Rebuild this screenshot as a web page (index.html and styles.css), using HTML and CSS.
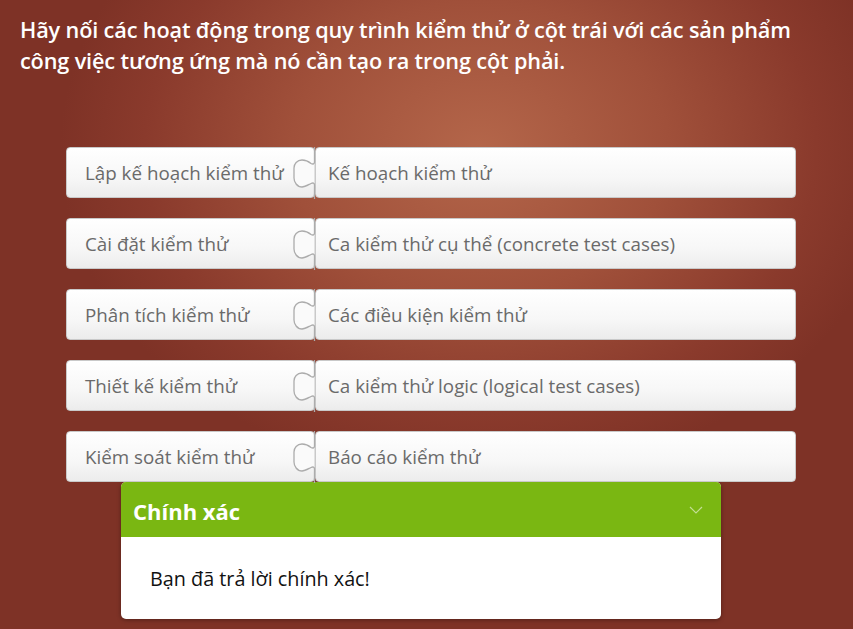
FILE: index.html
```html
<!DOCTYPE html>
<html lang="vi">
<head>
<meta charset="utf-8">
<link rel="stylesheet" href="styles.css">
</head>
<body>
<div class="slide">
  <p class="question">Hãy nối các hoạt động trong quy trình kiểm thử ở cột trái với các sản phẩm công việc tương ứng mà nó cần tạo ra trong cột phải.</p>
  <div class="pairs">
    <div class="pair">
      <div class="item left">Lập kế hoạch kiểm thử</div>
      <div class="item right">Kế hoạch kiểm thử</div>
      <svg class="joint" viewBox="0 0 26 52" width="26" height="52"><path d="M23.5 0 V15 C23.5 17 22 17.5 20 16.5 C17 14 14 13 11 13 C6 13 3 17 3 21 V31 C3 35 6 40 11 40 C14 40 17 38 20 36.5 C22 35.5 23.5 36 23.5 38 V52" fill="#fafafa" stroke="#acacac" stroke-width="1.3"/></svg>
    </div>
    <div class="pair">
      <div class="item left">Cài đặt kiểm thử</div>
      <div class="item right">Ca kiểm thử cụ thể (concrete test cases)</div>
      <svg class="joint" viewBox="0 0 26 52" width="26" height="52"><path d="M23.5 0 V15 C23.5 17 22 17.5 20 16.5 C17 14 14 13 11 13 C6 13 3 17 3 21 V31 C3 35 6 40 11 40 C14 40 17 38 20 36.5 C22 35.5 23.5 36 23.5 38 V52" fill="#fafafa" stroke="#acacac" stroke-width="1.3"/></svg>
    </div>
    <div class="pair">
      <div class="item left">Phân tích kiểm thử</div>
      <div class="item right">Các điều kiện kiểm thử</div>
      <svg class="joint" viewBox="0 0 26 52" width="26" height="52"><path d="M23.5 0 V15 C23.5 17 22 17.5 20 16.5 C17 14 14 13 11 13 C6 13 3 17 3 21 V31 C3 35 6 40 11 40 C14 40 17 38 20 36.5 C22 35.5 23.5 36 23.5 38 V52" fill="#fafafa" stroke="#acacac" stroke-width="1.3"/></svg>
    </div>
    <div class="pair">
      <div class="item left">Thiết kế kiểm thử</div>
      <div class="item right">Ca kiểm thử logic (logical test cases)</div>
      <svg class="joint" viewBox="0 0 26 52" width="26" height="52"><path d="M23.5 0 V15 C23.5 17 22 17.5 20 16.5 C17 14 14 13 11 13 C6 13 3 17 3 21 V31 C3 35 6 40 11 40 C14 40 17 38 20 36.5 C22 35.5 23.5 36 23.5 38 V52" fill="#fafafa" stroke="#acacac" stroke-width="1.3"/></svg>
    </div>
    <div class="pair">
      <div class="item left">Kiểm soát kiểm thử</div>
      <div class="item right">Báo cáo kiểm thử</div>
      <svg class="joint" viewBox="0 0 26 52" width="26" height="52"><path d="M23.5 0 V15 C23.5 17 22 17.5 20 16.5 C17 14 14 13 11 13 C6 13 3 17 3 21 V31 C3 35 6 40 11 40 C14 40 17 38 20 36.5 C22 35.5 23.5 36 23.5 38 V52" fill="#fafafa" stroke="#acacac" stroke-width="1.3"/></svg>
    </div>
  </div>
  <div class="feedback">
    <div class="fb-head">
      <span class="fb-title">Chính xác</span>
      <svg class="chev" width="14" height="8" viewBox="0 0 14 8"><path d="M1 1 L7 7 L13 1" fill="none" stroke="rgba(255,255,255,0.55)" stroke-width="1.2"/></svg>
    </div>
    <div class="fb-body">Bạn đã trả lời chính xác!</div>
  </div>
</div>
</body>
</html>
```

FILE: styles.css
```css
html, body {
  margin: 0;
  padding: 0;
}
body {
  width: 853px;
  height: 629px;
  overflow: hidden;
  font-family: "Open Sans", "Noto Sans", sans-serif;
}
.slide {
  width: 853px;
  height: 629px;
  background: radial-gradient(ellipse 420px 330px at 480px 150px, #b4664a 0%, #a0503a 45%, #8a3a2c 80%, #7e3226 100%);
  background-color: #7e3226;
  display: flex;
  flex-direction: column;
}
.question {
  margin: 0;
  padding: 14px 50px 0 20px;
  color: #ffffff;
  font-size: 21.7px;
  font-weight: 600;
  line-height: 31px;
  letter-spacing: -0.15px;
}
.pairs {
  margin: 71px 0 0 66px;
  width: 730px;
  display: flex;
  flex-direction: column;
  gap: 20px;
}
.pair {
  position: relative;
  display: flex;
  height: 51px;
}
.item {
  box-sizing: border-box;
  height: 51px;
  display: flex;
  align-items: center;
  background: linear-gradient(#ffffff, #f7f7f7 60%, #ececec);
  border: 1px solid #c9c9c9;
  border-radius: 4px;
  color: #6a6a6a;
  font-size: 18.8px;
}
.left {
  width: 249px;
  padding-left: 18px;
}
.right {
  flex: 1;
  padding-left: 12px;
}
.joint {
  position: absolute;
  left: 225px;
  top: 0;
}
.feedback {
  margin-left: 121px;
  width: 600px;
  border-radius: 5px;
  overflow: hidden;
  background: #ffffff;
  box-shadow: 0 1px 4px rgba(0, 0, 0, 0.35);
}
.fb-head {
  height: 55px;
  background: #7ab712;
  display: flex;
  align-items: center;
  justify-content: space-between;
  padding: 0 18px 0 12px;
}
.fb-title {
  color: #ffffff;
  font-size: 22px;
  font-weight: 700;
  padding-top: 2px;
}
.chev {
  display: block;
}
.fb-body {
  height: 82px;
  display: flex;
  align-items: center;
  padding-left: 29px;
  color: #111111;
  font-size: 19.8px;
}
```
